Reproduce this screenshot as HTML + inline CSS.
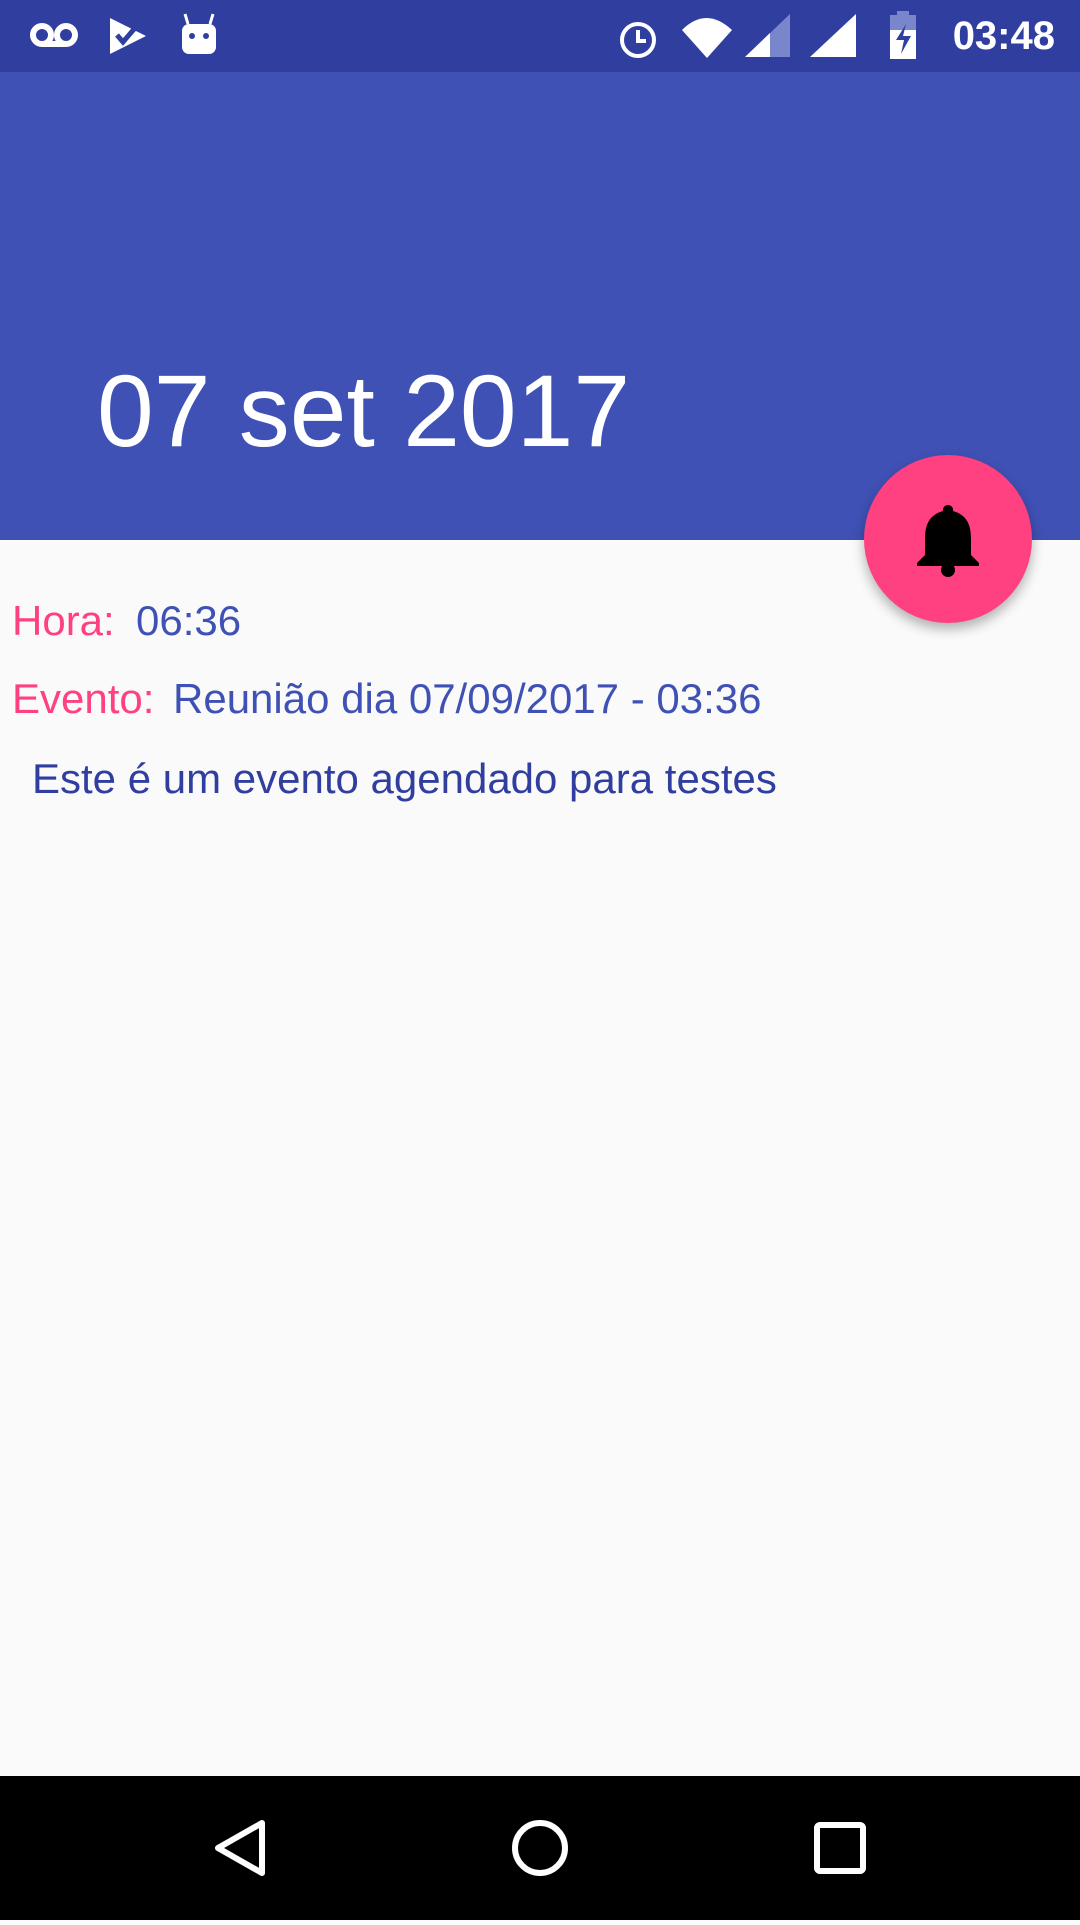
<!DOCTYPE html>
<html><head><meta charset="utf-8"><style>
*{margin:0;padding:0;box-sizing:border-box}
body{width:1080px;height:1920px;background:#FAFAFA;font-family:"Liberation Sans",Roboto,sans-serif;position:relative;overflow:hidden}
.sb{position:absolute;top:0;left:0;width:1080px;height:72px;background:#303F9F}
.hd{position:absolute;top:72px;left:0;width:1080px;height:468px;background:#3F51B5}
.title{position:absolute;left:97px;top:288px;font-size:102px;color:#fff;line-height:1}
.fab{position:absolute;left:864px;top:455px;width:168px;height:168px;border-radius:50%;background:#FF4081;box-shadow:0 6px 12px rgba(0,0,0,.3)}
.t{position:absolute;font-size:42px;line-height:1;white-space:nowrap}
.p{color:#FF4081}.b{color:#3F51B5}.d{color:#303F9F}
.nav{position:absolute;left:0;top:1776px;width:1080px;height:144px;background:#000}
.clock{position:absolute;right:25px;top:14px;color:#fff;font-size:40px;font-weight:bold}
</style></head><body>
<div class="sb">
<svg width="1080" height="72" style="position:absolute;left:0;top:0">
<g fill="none" stroke="#fff" stroke-width="6"><circle cx="42" cy="35" r="9"/><circle cx="66" cy="35" r="9"/><line x1="42" y1="44" x2="66" y2="44"/></g>
<path d="M110 18 L146 36 L110 54 Z" fill="#fff"/><path d="M117 35 l6 7 l12 -14" stroke="#303F9F" stroke-width="5" fill="none"/>
<rect x="182" y="24" width="34" height="30" rx="7" fill="#fff"/><line x1="188" y1="24" x2="185" y2="14" stroke="#fff" stroke-width="3"/><line x1="210" y1="24" x2="213" y2="14" stroke="#fff" stroke-width="3"/>
<circle cx="192" cy="36" r="3" fill="#303F9F"/><circle cx="206" cy="36" r="3" fill="#303F9F"/>
<circle cx="638" cy="40" r="16" fill="none" stroke="#fff" stroke-width="4"/><path d="M638 30 v11 h8" stroke="#fff" stroke-width="4" fill="none"/>
<path d="M682 30 q24 -24 50 0 l-25 28 z" fill="#fff"/>
<path d="M745 57 L790 14 V57 Z" fill="#7986CB"/><path d="M745 57 L770 33 V57 Z" fill="#fff"/>
<path d="M810 57 L856 14 V57 Z" fill="#fff"/>
<rect x="890" y="15" width="26" height="44" fill="#7986CB"/><rect x="890" y="30" width="26" height="29" fill="#fff"/><rect x="897" y="11" width="12" height="5" fill="#7986CB"/>
<path d="M906 24 L896 40 h8 l-3 14 l10 -18 h-8 z" fill="#303F9F"/>
</svg>
<div class="clock">03:48</div>
</div>
<div class="hd"><div class="title">07 set 2017</div></div>
<div class="fab"><svg width="168" height="168"><path d="M84 50 a5 5 0 0 1 5 6 c14 4 18 14 18 28 v16 l8 8 v3 H53 v-3 l8 -8 V84 c0 -14 4 -24 18 -28 a5 5 0 0 1 5 -6z" fill="#000"/><circle cx="84" cy="115" r="7" fill="#000"/></svg></div>
<div class="t p" style="left:12px;top:600px">Hora:</div>
<div class="t b" style="left:136px;top:600px">06:36</div>
<div class="t p" style="left:12px;top:678px">Evento:</div>
<div class="t b" style="left:173px;top:678px">Reunião dia 07/09/2017 - 03:36</div>
<div class="t d" style="left:32px;top:758px">Este é um evento agendado para testes</div>
<div class="nav"><svg width="1080" height="144">
<path d="M262 47 L218 72 L262 97 Z" fill="none" stroke="#fff" stroke-width="6" stroke-linejoin="round"/>
<circle cx="540" cy="72" r="25" fill="none" stroke="#fff" stroke-width="6"/>
<rect x="817" y="49" width="46" height="46" rx="3" fill="none" stroke="#fff" stroke-width="6"/>
</svg></div>
</body></html>
